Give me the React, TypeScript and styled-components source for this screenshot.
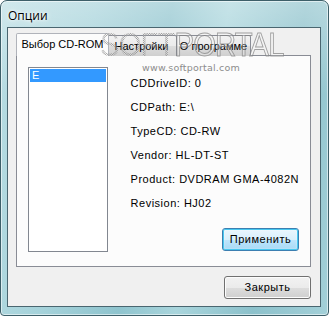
import styled, { createGlobalStyle, css } from 'styled-components';

const GlobalStyle = createGlobalStyle`
  html, body {
    margin: 0;
    padding: 0;
    background: #ffffff;
  }
  body {
    font-family: "Liberation Sans", Arial, sans-serif;
    font-size: 11px;
    letter-spacing: 0.5px;
    color: #000;
  }
`;

const Window = styled.div`
  position: relative;
  box-sizing: border-box;
  width: 329px;
  height: 316px;
  display: flex;
  flex-direction: column;
  padding: 0 7px 8px 6px;
  border: 1px solid #3d5f69;
  border-radius: 7px 7px 4px 4px;
  background:
    linear-gradient(180deg, rgba(255, 255, 255, 0.35) 0%, rgba(255, 255, 255, 0) 30%),
    linear-gradient(100deg, #b9dde3 0%, #a5d2da 25%, #8fc4ce 45%, #a9d5dc 60%, #8cc1cb 80%, #a3d0d8 100%);
  box-shadow: inset 0 0 0 1px rgba(255, 255, 255, 0.55);
  overflow: hidden;
`;

const TitleBar = styled.div`
  height: 26px;
  display: flex;
  align-items: center;
  padding: 2px 0 0 1px;
  box-sizing: border-box;
`;

const Title = styled.span`
  font-family: "Open Sans", "Noto Sans", sans-serif;
  font-size: 12px;
  letter-spacing: 0;
  color: #000;
  text-shadow: 0 0 6px #ffffff, 0 0 3px #ffffff;
`;

const Client = styled.div`
  flex: 1;
  display: flex;
  flex-direction: column;
  background: #f0f0f0;
  border: 1px solid #4a6670;
  padding: 6px 9px 7px 8px;
`;

const TabStrip = styled.div`
  display: flex;
  align-items: flex-end;
  height: 22px;
  position: relative;
  z-index: 1;
  margin-bottom: -1px;
`;

const Tab = styled.div<{ $active?: boolean; $width: number }>`
  box-sizing: border-box;
  width: ${(p) => p.$width}px;
  display: flex;
  align-items: center;
  justify-content: center;
  border: 1px solid #898c95;
  border-bottom: none;
  border-radius: 2px 2px 0 0;
  white-space: nowrap;
  letter-spacing: 0;
  ${(p) =>
    p.$active
      ? css`
          height: 23px;
          padding-bottom: 3px;
          background: #fcfcfc;
          border-color: #b0b3ba;
          margin-right: -2px;
          position: relative;
          z-index: 2;
        `
      : css`
          height: 21px;
          padding-bottom: 1px;
          margin-left: -1px;
          background: linear-gradient(180deg, #f2f2f2 0%, #ebebeb 50%, #dddddd 51%, #cfcfcf 100%);
        `}
`;

const Panel = styled.div`
  box-sizing: border-box;
  height: 212px;
  border: 1px solid #898c95;
  background: #fcfcfc;
  display: flex;
  padding: 11px 11px 15px 11px;
`;

const ListBox = styled.div`
  box-sizing: border-box;
  width: 82px;
  height: 185px;
  border: 1px solid #828790;
  background: #ffffff;
  padding: 1px;
`;

const ListItem = styled.div<{ $selected?: boolean }>`
  height: 13px;
  line-height: 13px;
  padding-left: 2px;
  color: ${(p) => (p.$selected ? '#ffffff' : '#000000')};
  background: ${(p) => (p.$selected ? '#3399ff' : 'transparent')};
`;

const InfoColumn = styled.div`
  flex: 1;
  display: flex;
  flex-direction: column;
  margin-left: 23px;
`;

const InfoList = styled.div`
  display: flex;
  flex-direction: column;
  gap: 11px;
  padding-top: 10px;
`;

const InfoRow = styled.div`
  height: 13px;
  line-height: 13px;
  white-space: nowrap;
`;

const Footer = styled.div`
  display: flex;
  justify-content: flex-end;
  margin-top: auto;
`;

const Button = styled.button<{ $default?: boolean; $width: number }>`
  box-sizing: border-box;
  width: ${(p) => p.$width}px;
  height: 23px;
  font-family: "Liberation Sans", Arial, sans-serif;
  font-size: 11px;
  letter-spacing: 0.5px;
  color: #000;
  padding: 0 0 1px;
  border-radius: 3px;
  border: 1px solid #707070;
  background: linear-gradient(180deg, #f2f2f2 0%, #ebebeb 50%, #dddddd 51%, #cfcfcf 100%);
  box-shadow: inset 0 0 0 1px #fcfcfc;
  ${(p) =>
    p.$default &&
    css`
      border-color: #3c7fb1;
      background: linear-gradient(180deg, #eaf6fd 0%, #d9f0fc 50%, #bee6fd 51%, #a7d9f5 100%);
      box-shadow: inset 0 0 0 1px #48c8f0, inset 0 0 2px 1px rgba(255, 255, 255, 0.6);
    `}
`;

/* the softportal watermark lies over the dialog, as in the screenshot */
const Watermark = styled.div`
  position: absolute;
  z-index: 10;
  left: 99px;
  top: 28px;
  pointer-events: none;
  display: flex;
  flex-direction: column;
  align-items: flex-start;
`;

const WatermarkLogo = styled.span`
  font-family: "Liberation Sans", Arial, sans-serif;
  font-size: 34px;
  line-height: 30px;
  letter-spacing: -1px;
  transform: scaleX(0.86);
  transform-origin: left center;
  white-space: nowrap;
`;

const LogoPart = styled.span<{ $dotted?: boolean }>`
  ${(p) =>
    p.$dotted
      ? css`
          color: transparent;
          background: repeating-conic-gradient(rgba(130, 130, 130, 0.75) 0 25%, rgba(255, 255, 255, 0.25) 0 50%) 0 0 / 2px 2px;
          -webkit-background-clip: text;
          background-clip: text;
        `
      : css`
          color: rgba(255, 255, 255, 0.25);
          -webkit-text-stroke: 1px rgba(125, 125, 125, 0.7);
        `}
`;

const WatermarkUrl = styled.span`
  font-family: "DejaVu Sans", sans-serif;
  font-size: 9.5px;
  letter-spacing: 0.2px;
  color: #8c8c8c;
  margin: 3px 0 0 42px;
`;

const info = [
  'CDDriveID: 0',
  'CDPath: E:\\',
  'TypeCD: CD-RW',
  'Vendor: HL-DT-ST',
  'Product: DVDRAM GMA-4082N',
  'Revision: HJ02',
];

export default function App() {
  return (
    <>
      <GlobalStyle />
      <Window>
        <TitleBar>
          <Title>Опции</Title>
        </TitleBar>
        <Client>
          <TabStrip>
            <Tab $active $width={93}>
              Выбор CD-ROM
            </Tab>
            <Tab $width={71}>Настройки</Tab>
            <Tab $width={75}>О программе</Tab>
          </TabStrip>
          <Panel>
            <ListBox>
              <ListItem $selected>E</ListItem>
            </ListBox>
            <InfoColumn>
              <InfoList>
                {info.map((line) => (
                  <InfoRow key={line}>{line}</InfoRow>
                ))}
              </InfoList>
              <Footer>
                <Button $default $width={77}>
                  Применить
                </Button>
              </Footer>
            </InfoColumn>
          </Panel>
          <Footer>
            <Button $width={87}>Закрыть</Button>
          </Footer>
        </Client>
        <Watermark>
          <WatermarkLogo>
            <LogoPart $dotted>SOFT</LogoPart>
            <LogoPart>PORTAL</LogoPart>
          </WatermarkLogo>
          <WatermarkUrl>www.softportal.com</WatermarkUrl>
        </Watermark>
      </Window>
    </>
  );
}
